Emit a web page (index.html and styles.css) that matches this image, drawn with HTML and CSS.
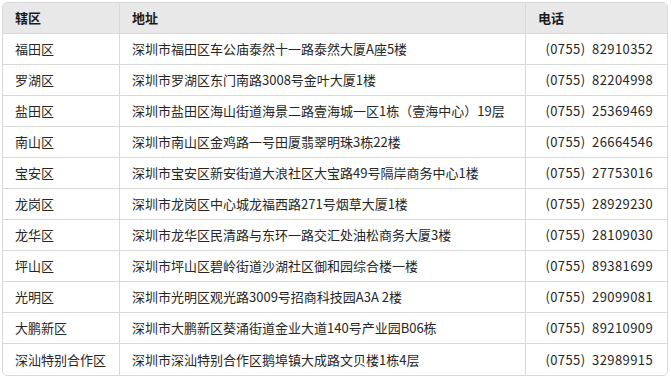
FILE: index.html
```html
<!DOCTYPE html>
<html lang="zh-CN">
<head>
<meta charset="utf-8">
<link rel="stylesheet" href="styles.css">
</head>
<body>
<div class="wrap">
<table class="tbl">
<colgroup><col class="c1"><col class="c2"><col class="c3"></colgroup>
<thead>
<tr><th>辖区</th><th>地址</th><th>电话</th></tr>
</thead>
<tbody>
<tr><td>福田区</td><td>深圳市福田区车公庙泰然十一路泰然大厦A座5楼</td><td class="ph">(0755)&nbsp; 82910352</td></tr>
<tr><td>罗湖区</td><td>深圳市罗湖区东门南路3008号金叶大厦1楼</td><td class="ph">(0755)&nbsp; 82204998</td></tr>
<tr><td>盐田区</td><td>深圳市盐田区海山街道海景二路壹海城一区1栋（壹海中心）19层</td><td class="ph">(0755)&nbsp; 25369469</td></tr>
<tr><td>南山区</td><td>深圳市南山区金鸡路一号田厦翡翠明珠3栋22楼</td><td class="ph">(0755)&nbsp; 26664546</td></tr>
<tr><td>宝安区</td><td>深圳市宝安区新安街道大浪社区大宝路49号隔岸商务中心1楼</td><td class="ph">(0755)&nbsp; 27753016</td></tr>
<tr><td>龙岗区</td><td>深圳市龙岗区中心城龙福西路271号烟草大厦1楼</td><td class="ph">(0755)&nbsp; 28929230</td></tr>
<tr><td>龙华区</td><td>深圳市龙华区民清路与东环一路交汇处油松商务大厦3楼</td><td class="ph">(0755)&nbsp; 28109030</td></tr>
<tr><td>坪山区</td><td>深圳市坪山区碧岭街道沙湖社区御和园综合楼一楼</td><td class="ph">(0755)&nbsp; 89381699</td></tr>
<tr><td>光明区</td><td>深圳市光明区观光路3009号招商科技园A3A 2楼</td><td class="ph">(0755)&nbsp; 29099081</td></tr>
<tr><td>大鹏新区</td><td>深圳市大鹏新区葵涌街道金业大道140号产业园B06栋</td><td class="ph">(0755)&nbsp; 89210909</td></tr>
<tr><td>深汕特别合作区</td><td>深圳市深汕特别合作区鹅埠镇大成路文贝楼1栋4层</td><td class="ph">(0755)&nbsp; 32989915</td></tr>
</tbody>
</table>
</div>
</body>
</html>
```

FILE: styles.css
```css
html, body {
  margin: 0;
  padding: 0;
  background: #ffffff;
}
body {
  padding: 2px 3px 0 2px;
  font-family: "Noto Sans CJK SC", "Noto Sans", sans-serif;
  font-size: 13px;
  color: #262626;
}
.wrap {
  border: 1px solid #d9d9d9;
  border-radius: 5px;
  overflow: hidden;
  width: 664px;
}
.tbl {
  width: 100%;
  border-collapse: separate;
  border-spacing: 0;
  table-layout: fixed;
}
.c1 { width: 117px; }
.c2 { width: 406px; }
.c3 { width: 141px; }
.tbl th, .tbl td {
  height: 31px;
  padding: 0 12px;
  text-align: left;
  white-space: nowrap;
  border-right: 1px solid #d9d9d9;
  border-bottom: 1px solid #d9d9d9;
  line-height: 30px;
  box-sizing: border-box;
}
.tbl th:last-child, .tbl td:last-child { border-right: none; }
.tbl tbody tr:last-child td { border-bottom: none; }
.tbl th {
  background: #e8e8e8;
  font-weight: 700;
  color: #1a1a1a;
}
.tbl td.ph {
  text-align: right;
  padding-right: 14px;
  letter-spacing: 0.4px;
}
```
